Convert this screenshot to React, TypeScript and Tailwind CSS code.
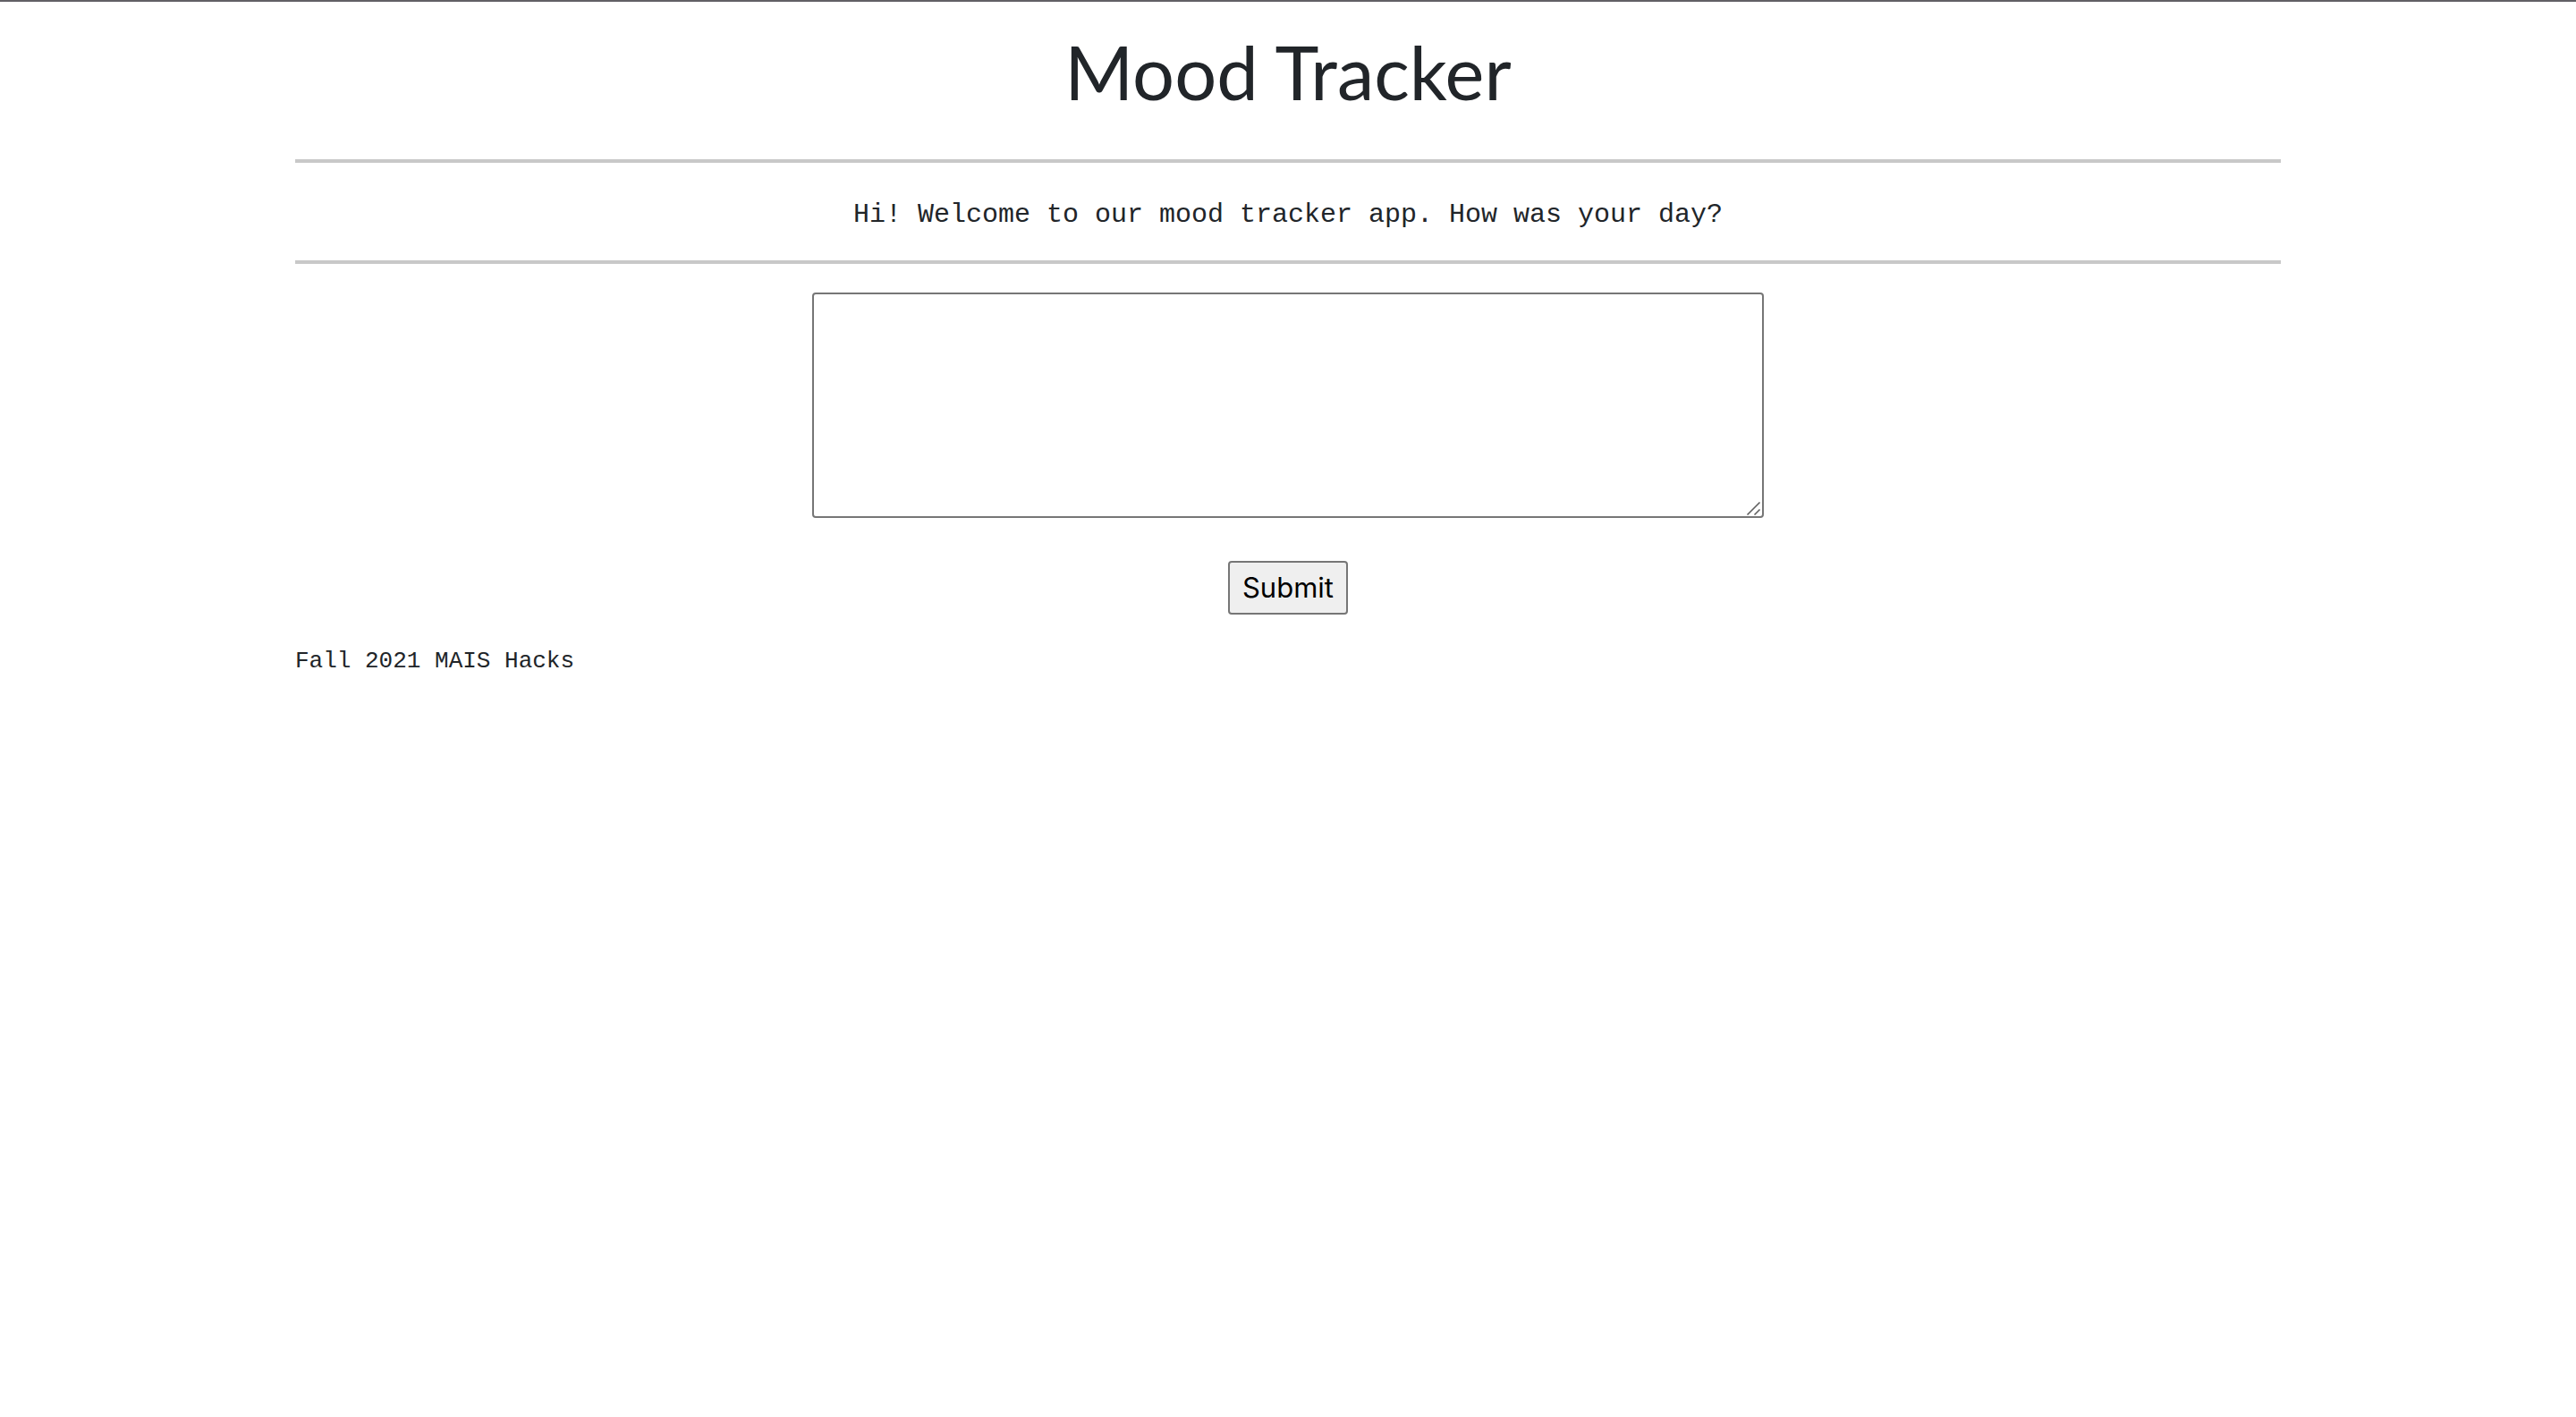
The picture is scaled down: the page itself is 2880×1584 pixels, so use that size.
export default function App() {
  return (
    <div className="min-h-screen border-t-2 border-[#626065] bg-white font-['Courier_New','Liberation_Mono',monospace] text-[#212529]">
      <div className="mx-auto max-w-[2280px] px-[30px]">
        <header>
          <h1 className="pt-[30px] text-center font-['Papyrus','Lato',sans-serif] text-[83px] leading-[96px]">Mood Tracker</h1>
        </header>
        <hr className="mt-[50px] border-t-4 border-[#c8c8c8]" />
        <main>
          <form className="flex flex-col items-center" onSubmit={(e) => e.preventDefault()}>
            <label htmlFor="day" className="pt-10 pb-[33px] text-[30px] leading-9">
              Hi! Welcome to our mood tracker app. How was your day?
            </label>
            <hr className="w-full border-t-4 border-[#c8c8c8]" />
            <div className="relative mt-8 flex max-w-full">
              <textarea
                id="day"
                className="h-[252px] w-[1064px] max-w-full rounded-[4px] border-2 border-[#767676] bg-white p-1 text-[30px] [&::-webkit-resizer]:hidden"
              />
              <svg
                className="pointer-events-none absolute right-0 bottom-0 size-5"
                viewBox="0 0 20 20"
                fill="none"
                stroke="#606060"
                strokeWidth="1.6"
                aria-hidden="true"
              >
                <path d="M1.5 16.5 15.5 2.5M9.5 16.5l6-6" />
              </svg>
            </div>
            <button type="submit" className="mt-12 min-w-[134px] rounded-[4px] border-2 border-[#767676] bg-[#efefef] px-3 py-2 font-['Inter',sans-serif] text-[31px] leading-10 text-black">
              Submit
            </button>
          </form>
        </main>
        <footer className="mt-9 text-[26px] leading-8">Fall 2021 MAIS Hacks</footer>
      </div>
    </div>
  );
}
